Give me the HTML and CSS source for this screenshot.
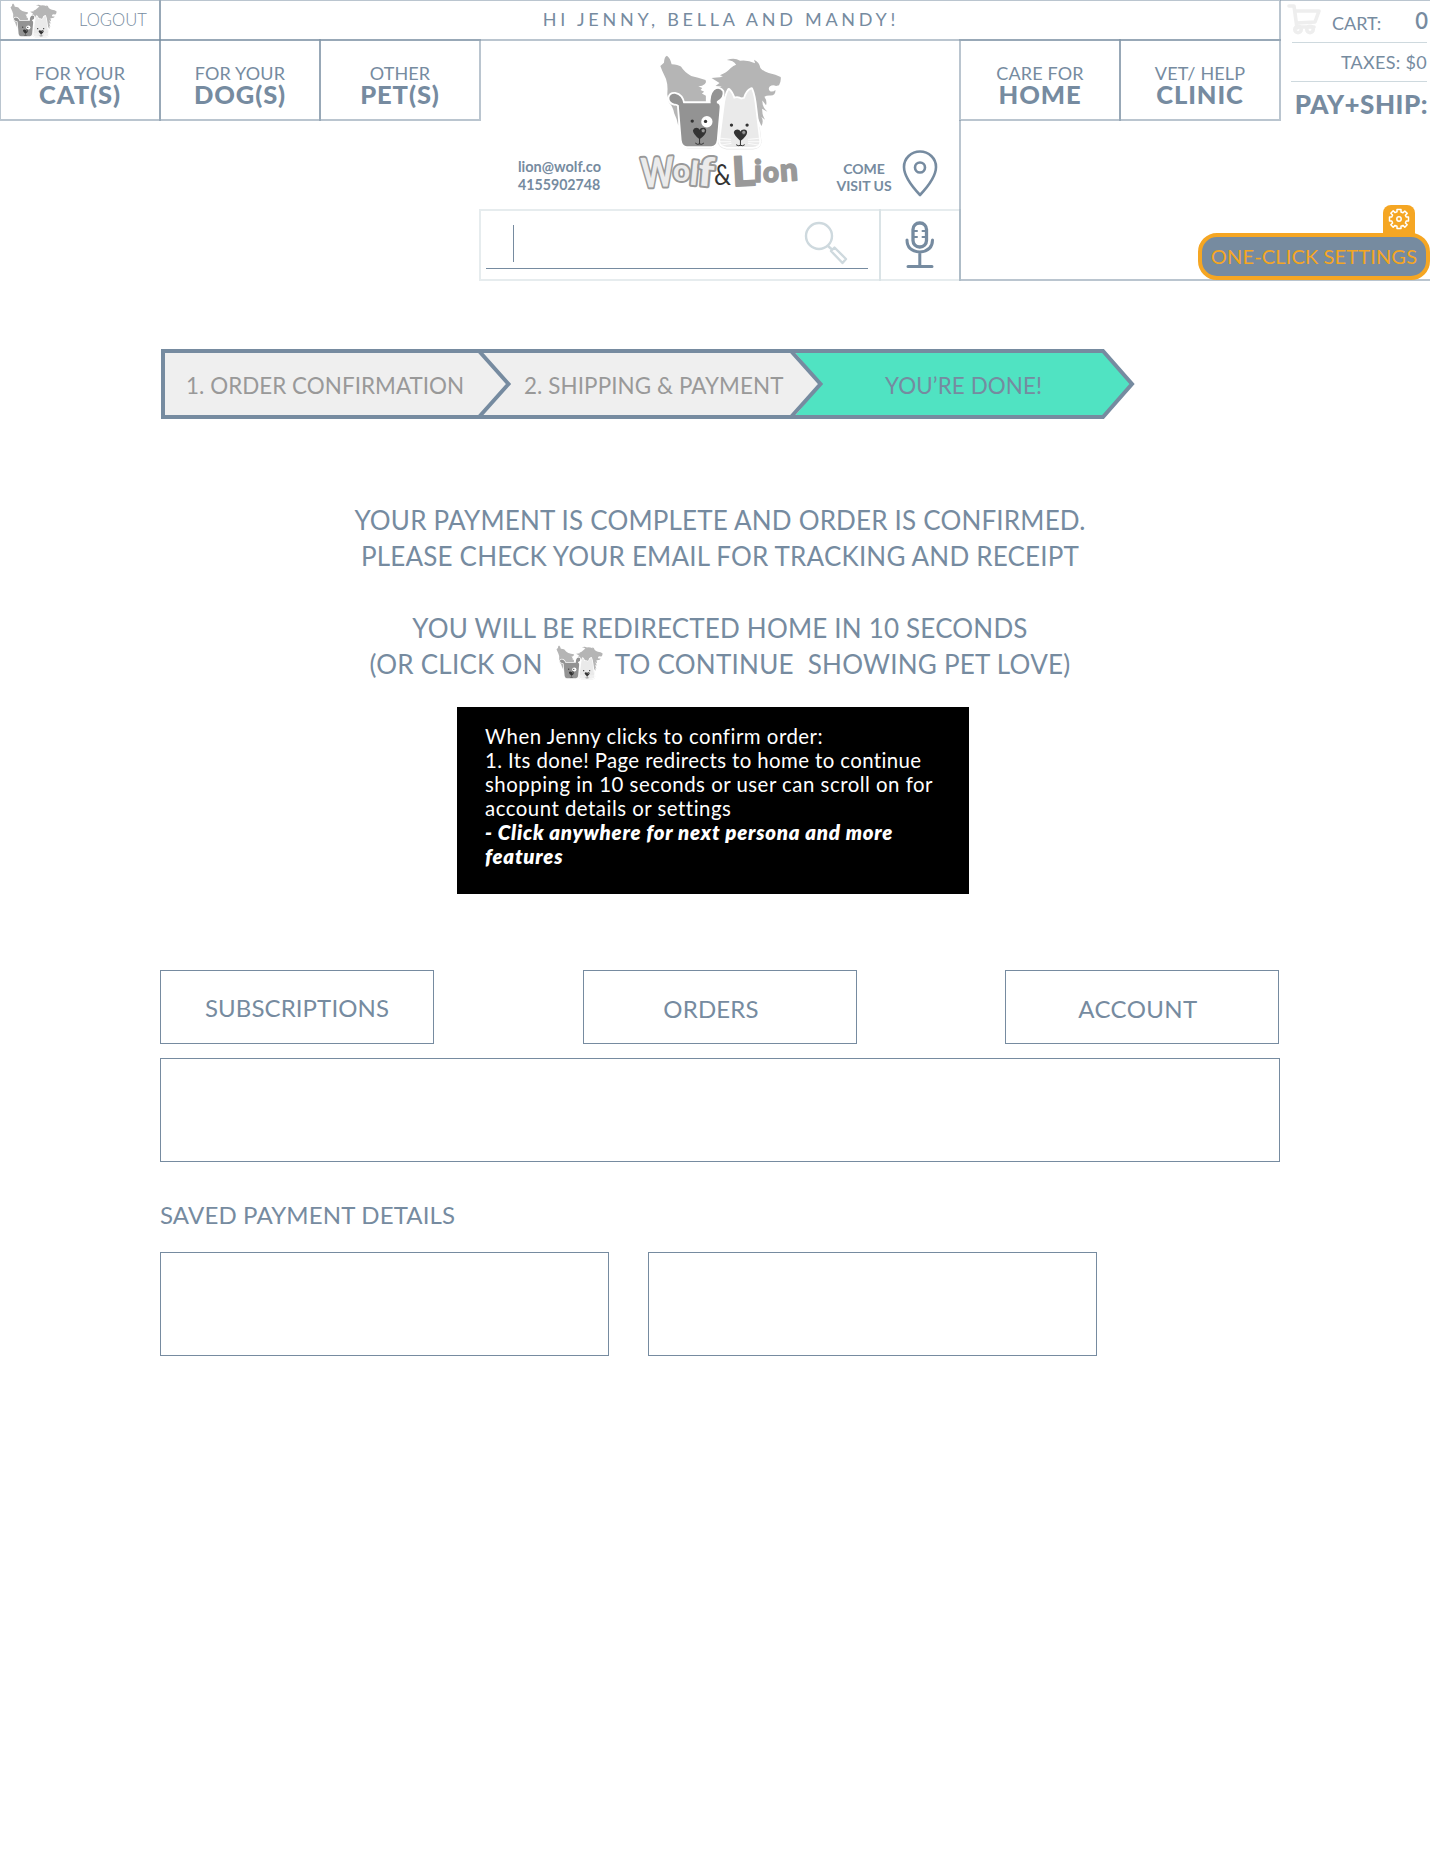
FILE: index.html
```html
<!DOCTYPE html>
<html lang="en">
<head>
<meta charset="utf-8">
<title>Wolf &amp; Lion – Order complete</title>
<link rel="stylesheet" href="styles.css">
</head>
<body>
<svg class="defs" aria-hidden="true">
  <symbol id="pack" viewBox="88 26 370 292" preserveAspectRatio="none">
    <path fill="#b5b5b5" d="M92 62L103 52Q104 33 112 31Q122 38 126 57Q145 58 154 64Q165 82 185 92Q205 97 228 104Q232 110 226 116Q217 124 206 123L218 128L213 134L224 140L217 145L229 152L229 175L150 180L146 242Q142 220 134 205Q130 184 118 172L113 148Q116 110 105 92Q97 76 92 62Z"/>
    <path fill="#b5b5b5" d="M292 44Q315 36 332 46Q355 43 377 54L374 43Q390 50 393 68Q402 79 418 83Q440 87 454 95Q456 108 449 120L440 122Q430 117 421 124Q415 132 422 138Q432 141 438 134Q440 150 424 151Q412 150 405 155Q414 168 410 180L399 166Q398 186 414 200L398 191Q398 210 407 224L396 216Q404 228 396 243L386 220L360 200L284 200L286 155L270 142L262 128L277 124L258 122L270 113L246 98L262 97Q273 97 280 93L271 90Q292 82 303 69Q312 60 320 58Q312 45 292 44Z"/>
    <g stroke="#e6e6e6" stroke-width="15" stroke-linejoin="round" fill="#fff">
      <path d="M160 240L162 285Q164 300 176 303H242Q256 300 260 285L264 240Z"/>
      <path d="M284 230L272 285Q270 302 292 306H370Q388 304 389 290L384 250Z"/>
    </g>
    <g stroke="#fff" stroke-width="11" stroke-linejoin="round" fill="#fff">
      <path d="M152 184Q142 174 134 176Q119 172 119 158Q122 145 136 146Q158 150 162 178Z"/>
      <path d="M244 180Q240 150 254 135Q270 125 279 139Q283 158 262 168L262 184Z"/>
      <path d="M152 174H262Q273 176 270 192L262 285Q260 302 245 304H172Q158 302 156 285L148 188Q147 176 152 174Z"/>
      <path d="M298 134Q307 142 313 161Q325 155 335 163L346 160Q352 138 366 132Q374 150 378 190L390 290Q390 304 370 306H292Q270 302 272 285L284 190Q288 150 298 134Z"/>
    </g>
    <g fill="#939393">
      <path d="M152 184Q142 174 134 176Q119 172 119 158Q122 145 136 146Q158 150 162 178Z"/>
      <path d="M244 180Q240 150 254 135Q270 125 279 139Q283 158 262 168L262 184Z"/>
      <path d="M152 174H262Q273 176 270 192L262 285Q260 302 245 304H172Q158 302 156 285L148 188Q147 176 152 174Z"/>
    </g>
    <path fill="#eaeaea" d="M298 134Q307 142 313 161Q325 155 335 163L346 160Q352 138 366 132Q374 150 378 190L390 290Q390 304 370 306H292Q270 302 272 285L284 190Q288 150 298 134Z"/>
    <g stroke="#fff" stroke-width="2.500"><path d="M266 279L305 283M266 290H305M270 301L306 295M356 283L396 279M356 290H396M356 295L392 301"/></g>
    <circle cx="232" cy="230" r="17" fill="#fff"/>
    <g fill="#333">
      <circle cx="188" cy="228" r="5"/><circle cx="228" cy="229" r="5"/>
      <circle cx="306" cy="240" r="5"/><circle cx="353" cy="240" r="5"/>
      <path d="M210 283Q190 266 190 256Q192 248 200 248Q208 248 210 254Q212 248 221 248Q230 248 230 257Q230 268 210 283Z"/>
      <path d="M333 288Q313 270 313 261Q315 253 323 253Q331 253 333 259Q335 253 344 253Q353 253 353 262Q353 272 333 288Z"/>
    </g>
    <circle cx="221" cy="257" r="6" fill="#999" stroke="#333" stroke-width="2"/><circle cx="343" cy="262" r="6" fill="#999" stroke="#333" stroke-width="2"/>
    <path fill="none" stroke="#333" stroke-width="3" d="M210 280V297M197 294Q203 300 210 297Q217 300 223 294M333 285V302M320 299Q326 304 333 301Q340 304 346 299"/>
  </symbol>
</svg>

<header class="header">
  <div class="topbar">
    <a class="cell logout"><svg class="mini"><use href="#pack"/></svg><span>LOGOUT</span></a>
    <div class="cell greeting"><span>HI JENNY, BELLA AND MANDY!</span></div>
  </div>
  <div class="cart">
    <div class="cart-row count">
      <svg class="cart-icon" viewBox="0 0 34 31" fill="none" stroke="#eee" stroke-width="3.600" stroke-linecap="round" stroke-linejoin="round"><path d="M2 2H7L10 24M8 7H32L28 18L10 19M10 23H27"/><circle cx="11" cy="25.500" r="3.200"/><circle cx="23" cy="25.500" r="3.200"/></svg>
      <span class="cart-label">CART:</span><b class="cart-num">0</b>
    </div>
    <div class="cart-row taxes"><span>TAXES: $0</span></div>
    <div class="pay"><span>PAY+SHIP:</span></div>
  </div>
  <nav class="nav left">
    <a class="cell"><span class="n1">FOR YOUR</span><b class="n2">CAT(S)</b></a>
    <a class="cell"><span class="n1">FOR YOUR</span><b class="n2">DOG(S)</b></a>
    <a class="cell"><span class="n1">OTHER</span><b class="n2">PET(S)</b></a>
  </nav>
  <div class="center">
    <div class="brand">
      <div class="contact"><span class="mail">lion@wolf.co</span><span class="phone">4155902748</span></div>
      <div class="logo">
        <svg class="logo-pack"><use href="#pack"/></svg>
        <svg class="wordmark" viewBox="0 0 164 40">
          <g class="wolf"><text x="3" y="34" textLength="33" lengthAdjust="spacingAndGlyphs" font-size="41" transform="rotate(-3 20 20)">W</text><text x="35" y="28" font-size="31" textLength="17" lengthAdjust="spacingAndGlyphs">o</text><text x="52" y="32" font-size="33" transform="rotate(6 56 22)">l</text><text x="60" y="33" font-size="40" textLength="16" lengthAdjust="spacingAndGlyphs" transform="rotate(5 68 20)">f</text></g>
          <text class="amp" x="76" y="32" font-size="28" textLength="17" lengthAdjust="spacingAndGlyphs">&amp;</text>
          <g class="lion"><text x="94" y="33" font-size="41" textLength="23" lengthAdjust="spacingAndGlyphs" transform="rotate(-3 105 20)">L</text><text x="116" y="29" font-size="30">i</text><text x="125" y="29" font-size="29" textLength="16" lengthAdjust="spacingAndGlyphs">o</text><text x="142" y="28" font-size="32" textLength="18" lengthAdjust="spacingAndGlyphs" transform="rotate(-4 150 20)">n</text></g>
        </svg>
      </div>
      <div class="visit"><span class="v1">COME</span><span class="v2">VISIT US</span></div>
      <svg class="pin" viewBox="0 0 36 47" fill="none" stroke="#768ba0"><path stroke-width="2.600" stroke-linejoin="round" d="M18 45Q2 28 2 17A16 15.500 0 0 1 34 17Q34 28 18 45Z"/><circle cx="18" cy="17.500" r="5" stroke-width="2.600"/></svg>
    </div>
    <div class="search">
      <div class="cell pale field"><i class="caret"></i>
        <svg class="glass" viewBox="0 0 44 44" fill="none" stroke="#ced9de" stroke-width="2.400"><circle cx="15" cy="15" r="13"/><path d="M24 25L28 28.500M27 30L30.500 26.500L42 38L38.500 42L27 30Z" stroke-linejoin="round"/></svg>
      </div>
      <div class="cell pale mic">
        <svg viewBox="0 0 30 47" fill="none" stroke="#768ba0" stroke-linecap="round"><rect x="8" y="2" width="13.500" height="24" rx="6.500" stroke-width="3.300"/><path stroke-width="2" d="M8 10H12M8 16H12M17.500 10H21M17.500 16H21"/><path stroke-width="3" d="M2 19Q2 30 14.800 31Q27.500 30 27.500 19M14.800 31V45M3 45.500H27"/></svg>
      </div>
    </div>
  </div>
  <div class="right">
    <nav class="nav">
      <a class="cell"><span class="n1">CARE FOR</span><b class="n2">HOME</b></a>
      <a class="cell"><span class="n1">VET/ HELP</span><b class="n2">CLINIC</b></a>
    </nav>
    <div class="tools">
      <div class="gear"><svg viewBox="0 0 22 22" fill="none" stroke="#fff" stroke-width="1.500" stroke-linejoin="round"><path d="M9 1.500H13V4L15 4.800L16.800 3L19.200 5.400L17.400 7.200L18.200 9H20.500V13H18.200L17.400 15L19.200 16.800L16.800 19.200L15 17.400L13 18.200V20.500H9V18.200L7 17.400L5.200 19.200L2.800 16.800L4.600 15L3.800 13H1.500V9H3.800L4.600 7L2.800 5.200L5.200 2.800L7 4.600L9 3.800Z"/><circle cx="11" cy="11" r="2.200"/></svg></div>
      <button class="settings"><span>ONE-CLICK SETTINGS</span></button>
    </div>
  </div>
</header>

<main class="main">
  <div class="steps">
    <svg class="steps-shape" viewBox="0 0 976 70" stroke="#768ba0" stroke-width="4">
      <path fill="#efefef" stroke="none" d="M2 2H633L661 35L633 68H2Z"/>
      <path fill="#50e3c2" stroke="none" d="M633 2H942L971 35L942 68H633L660 35Z"/>
      <path fill="none" d="M2 2H942L971 35L942 68H2ZM318 2L347.500 35L318 68M630 2L659.500 35L630 68"/>
    </svg>
    <span class="s1">1. ORDER CONFIRMATION</span><span class="s2">2. SHIPPING &amp; PAYMENT</span><span class="s3">YOU’RE DONE!</span>
  </div>

  <div class="message">
    <p>YOUR PAYMENT IS COMPLETE AND ORDER IS CONFIRMED.</p>
    <p>PLEASE CHECK YOUR EMAIL FOR TRACKING AND RECEIPT</p>
    <p class="redirect">YOU WILL BE REDIRECTED HOME IN 10 SECONDS</p>
    <p class="click"><span>(OR CLICK ON</span><svg class="inline"><use href="#pack"/></svg><span>TO CONTINUE&nbsp; SHOWING PET LOVE)</span></p>
  </div>

  <div class="note">
    <p>When Jenny clicks to confirm order:</p>
    <p class="tight">1. Its done! Page redirects to home to continue</p>
    <p>shopping in 10 seconds or user can scroll on for</p>
    <p>account details or settings</p>
    <p class="strong">- Click anywhere for next persona and more</p>
    <p class="strong">features</p>
  </div>

  <div class="tabs">
    <a class="box tab subs"><span>SUBSCRIPTIONS</span></a>
    <a class="box tab orders"><span>ORDERS</span></a>
    <a class="box tab account"><span>ACCOUNT</span></a>
  </div>
  <div class="box panel"></div>
  <h2 class="saved"><span>SAVED PAYMENT DETAILS</span></h2>
  <div class="cards"><div class="box panel"></div><div class="box panel"></div></div>
</main>
</body>
</html>
```
FILE: styles.css
```css
* { box-sizing: border-box; margin: 0; padding: 0; }
body { width: 1430px; min-height: 1867px; background: #fff; color: #768ba0; font-family: Lato, "Open Sans", sans-serif; overflow-x: hidden; }
svg { display: block; }
span, b, p { white-space: nowrap; }
.defs { position: absolute; width: 0; height: 0; }

/* Header grid: hairlines straddle the cell edges */
.header { display: grid; grid-template-columns: 480px 480px 320px 150px; grid-template-rows: 40px 80px 160px; height: 280px; }
.cell { position: relative; display: flex; }
.cell::after { content: ""; position: absolute; inset: -1px; border: 2px solid rgba(118, 139, 160, .5); pointer-events: none; }
.cell.pale::after { border-color: rgba(206, 217, 222, .5); }

.topbar { grid-column: 1 / 4; display: grid; grid-template-columns: 160px 1fr; }
.logout { align-items: center; padding-left: 10px; font-size: 16.6px; font-weight: 300; gap: 22px; }
.mini { width: 47px; height: 35px; }
.greeting { align-items: center; justify-content: center; padding: 0 0 2px 2px; font-size: 18px; letter-spacing: 3.75px; }

.cart { grid-column: 4; grid-row: 1 / 3; border-top: 1px solid #bac5cf; padding: 0 2px 0 7px; }
.cart-row { display: flex; border-bottom: 1px solid #ced9de; margin-left: 4px; margin-right: 1px; }
.count { height: 42px; margin-left: 5px; align-items: center; }
.cart-icon { width: 34px; height: 31px; margin-left: -5px; margin-top: -5px; }
.cart-label { font-size: 18px; margin-left: 11px; padding-top: 2px; }
.cart-num { font-size: 22px; font-weight: 600; margin: 0 -1px 2px auto; }
.taxes { height: 39px; align-items: center; justify-content: flex-end; padding-bottom: 1px; font-size: 18px; letter-spacing: .3px; }
.pay { display: flex; justify-content: flex-end; font-size: 26px; font-weight: 900; line-height: 30px; padding-top: 7px; letter-spacing: .5px; }

.nav { display: flex; height: 80px; }
.nav .cell { width: 160px; flex-direction: column; align-items: center; padding-top: 23px; }
.n1 { font-size: 18px; line-height: 20px; letter-spacing: .15px; }
.n2 { font-size: 25.5px; line-height: 23px; font-weight: 900; letter-spacing: .9px; }

.center { grid-row: 2 / 4; grid-column: 2; }
.brand { height: 170px; display: flex; align-items: flex-start; padding-left: 38px; }
.contact { width: 84px; margin-top: 118px; font-size: 14.5px; line-height: 18px; font-weight: 700; display: flex; flex-direction: column; }
.phone { font-size: 14.2px; }
.logo { width: 164px; margin-left: 36px; padding-top: 14px; }
.logo-pack { width: 123px; height: 97px; margin-left: 21px; }
.wordmark { width: 164px; height: 40px; margin-top: 2px; overflow: visible; }
.wordmark text { font-family: Lato, sans-serif; font-weight: 900; }
.wolf { fill: #ebebeb; stroke: #999; stroke-width: 4; stroke-linejoin: round; paint-order: stroke; }
.wordmark .amp { fill: #333; font-weight: 400; }
.lion { fill: #999; stroke: #999; stroke-width: 1.5; stroke-linejoin: round; }
.visit { width: 56px; margin-left: 34px; margin-top: 120px; font-size: 14px; line-height: 17px; font-weight: 700; display: flex; flex-direction: column; align-items: center; }
.pin { width: 36px; height: 47px; margin: 110px 0 0 10px; }

.search { display: flex; height: 70px; }
.field { width: 400px; }
.field::before { content: ""; position: absolute; left: 6px; right: 12px; bottom: 11px; height: 1px; background: #768ba0; }
.caret { width: 1px; height: 37px; margin: 15px 0 0 33px; background: #768ba0; }
.glass { width: 44px; height: 44px; margin: 11px 0 0 290px; }
.mic { width: 80px; justify-content: center; padding-top: 11px; }
.mic svg { width: 30px; height: 47px; }

.right { grid-row: 2 / 4; grid-column: 3 / 5; display: flex; flex-direction: column; }
.tools { position: relative; height: 160px; display: flex; flex-direction: column; align-items: flex-end; padding-top: 85px; }
.tools::before { content: ""; position: absolute; left: -1px; right: 0; top: 0; bottom: -1px; border: solid rgba(118, 139, 160, .5); border-width: 0 0 2px 2px; }
.gear { width: 32px; height: 32px; margin-right: 15px; padding: 3px 5px; border-radius: 8px 8px 0 0; background: #f5a623; position: relative; }
.gear svg { width: 22px; height: 22px; }
.settings { position: relative; margin-top: -4px; width: 232px; height: 47px; border: 4px solid #f5a623; border-radius: 19px; background: #768ba0; color: #f5a623; font: 20px/39px Lato, sans-serif; letter-spacing: .15px; display: flex; justify-content: center; }

/* Checkout */
.main { width: 1120px; margin-left: 160px; padding-top: 69px; }
.steps { position: relative; height: 70px; margin-left: 1px; display: flex; font-size: 22.4px; line-height: 74px; color: #999; }
.steps-shape { position: absolute; left: 0; top: 0; width: 976px; height: 70px; }
.steps span { position: relative; }
.s1 { width: 338px; margin-left: 25px; letter-spacing: .05px; }
.s2 { width: 361px; letter-spacing: .1px; }
.s3 { color: #768ba0; letter-spacing: .1px; }

.message { margin-top: 83px; font-size: 26px; line-height: 36px; letter-spacing: .19px; display: flex; flex-direction: column; align-items: center; }
.redirect { margin-top: 36px; }
.click { display: flex; }
.click span { letter-spacing: .26px; }
.inline { width: 47px; height: 35px; margin: -1px 12px 0 13px; }

.note { width: 512px; height: 187px; margin: 25px 0 0 297px; padding: 17px 0 0 28px; background: #000; color: #fff; font-size: 20.4px; line-height: 24px; letter-spacing: .5px; }
.tight { letter-spacing: .4px; }
.strong { font-weight: 800; font-style: italic; letter-spacing: .75px; }

.box { border: 1px solid #768ba0; }
.tabs { display: flex; justify-content: space-between; margin-top: 76px; width: 1119px; }
.tab { width: 274px; height: 74px; display: flex; justify-content: center; font-size: 24px; line-height: 74px; }
.subs { letter-spacing: .1px; }
.orders { padding-right: 17px; line-height: 76px; letter-spacing: .15px; }
.account { padding-right: 8px; line-height: 76px; letter-spacing: .4px; }
.panel { height: 104px; margin-top: 14px; }
.saved { font-size: 24px; font-weight: 400; line-height: 30px; margin-top: 38px; letter-spacing: .16px; }
.cards { display: flex; gap: 39px; margin-top: 22px; }
.cards .panel { width: 449px; margin-top: 0; }
```
